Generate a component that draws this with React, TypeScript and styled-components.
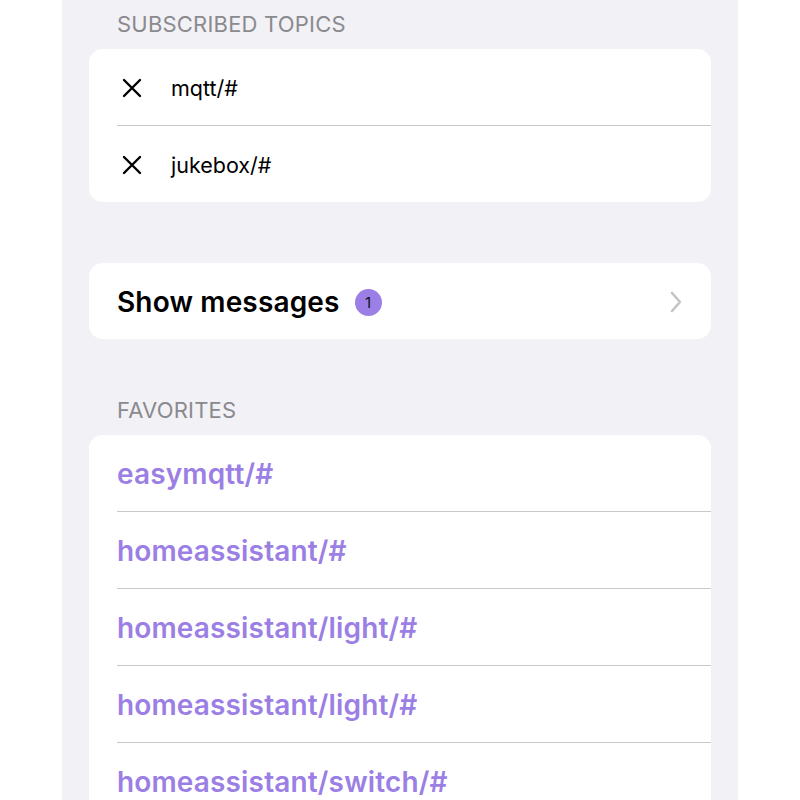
import React from "react";
import styled, { createGlobalStyle } from "styled-components";

const Global = createGlobalStyle`
  html, body { margin: 0; padding: 0; background: #ffffff; }
  body { font-family: Inter, "Liberation Sans", sans-serif; -webkit-font-smoothing: antialiased; }
`;

const Column = styled.div`
  width: 676px;
  margin: 0 62px;
  min-height: 800px;
  background: #f2f1f6;
  padding: 0 27px;
  box-sizing: border-box;
  display: flex;
  flex-direction: column;
`;

const SectionHeader = styled.div<{ $top?: number }>`
  margin-top: ${(p) => p.$top ?? 0}px;
  padding: 12px 0 13px 28px;
  line-height: 24px;
  font-size: 22px;
  color: #8a8a8e;
  text-transform: uppercase;
  letter-spacing: 0.2px;
`;

const Card = styled.div<{ $top?: number }>`
  margin-top: ${(p) => p.$top ?? 0}px;
  background: #ffffff;
  border-radius: 14px;
  overflow: hidden;
`;

const Row = styled.div`
  height: 76px;
  display: flex;
  align-items: center;
  padding: 2px 28px 0;
  box-sizing: border-box;
  & + & {
    border-top: 1px solid #c8c8cb;
    margin-left: 28px;
    padding-left: 0;
    height: 77px;
  }
`;

const TopicText = styled.span`
  font-size: 21.5px;
  color: #000;
  margin-left: 28px;
`;

const RemoveIcon = styled.svg`
  width: 22px;
  height: 22px;
  flex: none;
  margin-left: 4px;
`;

const NavLabel = styled.span`
  font-size: 28px;
  font-weight: 600;
  letter-spacing: 0.15px;
  color: #000;
`;

const Badge = styled.span`
  margin-left: 15px;
  width: 27px;
  height: 27px;
  border-radius: 50%;
  background: #9b7fe6;
  color: #111;
  font-size: 15px;
  display: inline-flex;
  align-items: center;
  justify-content: center;
`;

const Chevron = styled.svg`
  margin-left: auto;
  width: 14px;
  height: 22px;
`;

const FavText = styled.span`
  font-size: 28px;
  font-weight: 600;
  letter-spacing: 0.15px;
  color: #9b7fe4;
`;

const X = () => (
  <RemoveIcon viewBox="0 0 22 22">
    <path d="M3 3 L19 19 M19 3 L3 19" stroke="#000" strokeWidth="2.4" strokeLinecap="round" fill="none" />
  </RemoveIcon>
);

const topics = ["mqtt/#", "jukebox/#"];
const favorites = [
  "easymqtt/#",
  "homeassistant/#",
  "homeassistant/light/#",
  "homeassistant/light/#",
  "homeassistant/switch/#",
];

export default function App() {
  return (
    <>
      <Global />
      <Column>
        <SectionHeader>Subscribed topics</SectionHeader>
        <Card>
          {topics.map((t) => (
            <Row key={t}>
              <X />
              <TopicText>{t}</TopicText>
            </Row>
          ))}
        </Card>
        <Card $top={61}>
          <Row>
            <NavLabel>Show messages</NavLabel>
            <Badge>1</Badge>
            <Chevron viewBox="0 0 14 22">
              <path d="M3 2 L11 11 L3 20" stroke="#c4c4c7" strokeWidth="2.6" strokeLinecap="round" strokeLinejoin="round" fill="none" />
            </Chevron>
          </Row>
        </Card>
        <SectionHeader $top={47}>Favorites</SectionHeader>
        <Card>
          {favorites.map((f, i) => (
            <Row key={i}>
              <FavText>{f}</FavText>
            </Row>
          ))}
        </Card>
      </Column>
    </>
  );
}
